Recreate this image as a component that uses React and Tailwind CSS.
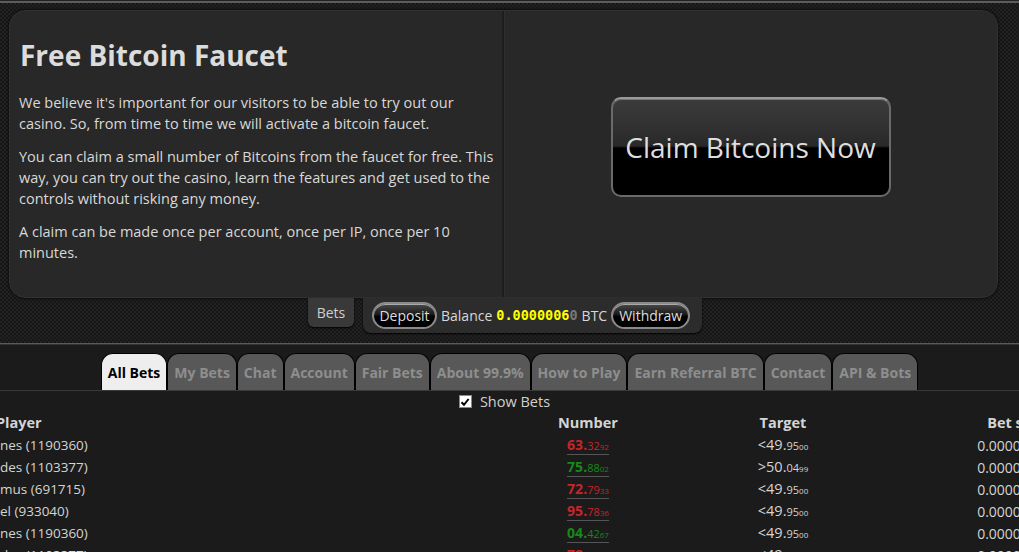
import React from "react";

const TABS = ["All Bets", "My Bets", "Chat", "Account", "Fair Bets", "About 99.9%", "How to Play", "Earn Referral BTC", "Contact", "API & Bots"];

const ROWS = [
  { player: "nes (1190360)", n: ["63", "32", "92"], win: false, t: ["<49", "95", "00"] },
  { player: "des (1103377)", n: ["75", "88", "02"], win: true, t: [">50", "04", "99"] },
  { player: "mus (691715)", n: ["72", "79", "33"], win: false, t: ["<49", "95", "00"] },
  { player: "el (933040)", n: ["95", "78", "36"], win: false, t: ["<49", "95", "00"] },
  { player: "nes (1190360)", n: ["04", "42", "67"], win: true, t: ["<49", "95", "00"] },
  { player: "des (1103377)", n: ["78", "11", "40"], win: false, t: ["<49", "95", "00"] },
];

function Pill({ children, className = "" }) {
  return (
    <button
      className={`h-[27px] rounded-full border-2 border-[#8a8a8a] bg-[linear-gradient(#4a4a4a,#1a1a1a_45%,#000_55%,#000)] px-[5px] text-[14px] leading-none text-[#ddd] shadow-[inset_0_1px_0_#aaa] ${className}`}
    >
      {children}
    </button>
  );
}

function Roll({ n, win }) {
  return (
    <span
      className={`border-b border-[#555] text-[14px] font-bold leading-[17px] ${win ? "text-[#168a16]" : "text-[#c6252b]"}`}
    >
      {n[0]}.
      <span className="text-[11px] font-normal">{n[1]}</span>
      <span className="text-[8px] font-normal">{n[2]}</span>
    </span>
  );
}

export default function App() {
  return (
    <div className="h-[552px] w-[1019px] overflow-hidden bg-[#1b1b1b] font-['Open_Sans',sans-serif] text-[#d8d8d8]">
      <div className="h-px bg-[#222]" />
      <div className="h-[2px] bg-[#5c5c5c]" />

      {/* checkered top area */}
      <div className="h-[340px] bg-[repeating-conic-gradient(#222_0_25%,#161616_0_50%)] bg-[length:4px_4px] pt-[7px]">
        <div className="ml-[9px] flex h-[288px] w-[989px] overflow-hidden rounded-[16px] border border-[#313131] bg-[#282828] shadow-[0_0_3px_#000]">
          <div className="w-[492px] shrink-0 pl-[9px] pr-[2px] pt-[26px]">
            <h1 className="mb-[19px] pl-px text-[28px] font-bold leading-[36px] text-[#dcdcdc]">Free Bitcoin Faucet</h1>
            <p className="mb-[12px] text-[14.5px] leading-[21px]">
              We believe it's important for our visitors to be able to try out our casino. So, from time to time we will activate a bitcoin faucet.
            </p>
            <p className="mb-[12px] text-[14.5px] leading-[21px]">
              You can claim a small number of Bitcoins from the faucet for free. This way, you can try out the casino, learn the features and get used to the controls without risking any money.
            </p>
            <p className="text-[14.5px] leading-[21px]">
              A claim can be made once per account, once per IP, once per 10 minutes.
            </p>
          </div>
          <div className="flex flex-1 items-center justify-center border-l-2 border-[#1d1d1d] pb-[14px] shadow-[inset_1px_0_0_#2f2f2f]">
            <button className="h-[100px] w-[280px] rounded-[10px] border-2 border-[#6a6a6a] border-t-[#9a9a9a] bg-[linear-gradient(#3c3c3c,#292929_49%,#000_51%,#000)] text-[28px] text-[#dedede] shadow-[inset_0_1px_0_#777]">
              Claim Bitcoins Now
            </button>
          </div>
        </div>

        <div className="ml-[308px] flex items-start gap-[9px]">
          <div className="flex h-[29px] w-[46px] items-center justify-center rounded-b-[6px] bg-[#393939] text-[14px] text-[#cfcfcf] shadow-[0_1px_2px_#000]">
            Bets
          </div>
          <div className="flex h-[35px] w-[339px] items-center gap-[4px] rounded-b-[8px] bg-[#2c2c2c] pl-[9px] text-[14px] shadow-[0_1px_2px_#000]">
            <Pill className="w-[65px]">Deposit</Pill>
            <span>Balance</span>
            <span className="font-['DejaVu_Sans_Mono',monospace] text-[13.5px] font-bold text-[#ffff00]">
              0.0000006<span className="text-[#777]">0</span>
            </span>
            <span>BTC</span>
            <Pill className="w-[79px]">Withdraw</Pill>
          </div>
        </div>
      </div>

      <div className="h-px bg-[#5a5a5a]" />
      <div className="h-px bg-[#333]" />

      {/* tabs */}
      <div className="flex justify-center border-b border-[#3a3a3a] pt-[8px]">
        {TABS.map((t, i) => (
          <div
            key={t}
            className={`flex h-[37px] items-center rounded-t-[12px] border border-b-0 border-black px-[6px] text-[14px] font-bold ${
              i === 0 ? "bg-[#eeeeee] text-black" : "bg-[#585858] text-[#8e8e8e]"
            }`}
          >
            {t}
          </div>
        ))}
      </div>

      <div className="flex h-[21px] items-center justify-center gap-[8px] pr-[10px] text-[14.5px] text-[#d0d0d0]">
        <span className="flex h-[13px] w-[13px] items-center justify-center border border-[#888] bg-white">
          <svg width="10" height="10" viewBox="0 0 10 10">
            <path d="M1.5 5.2 L4 7.8 L8.6 2" fill="none" stroke="#000" strokeWidth="2" />
          </svg>
        </span>
        <span>Show Bets</span>
      </div>

      {/* bets table */}
      <div className="text-[13.5px]">
        <div className="flex h-[22px] items-center text-[14.5px] font-bold text-[#d4d4d4]">
          <div className="-ml-[4px] w-[494px] shrink-0">Player</div>
          <div className="w-[196px] shrink-0 text-center">Number</div>
          <div className="w-[194px] shrink-0 text-center">Target</div>
          <div className="w-[270px] shrink-0 text-center">Bet size</div>
        </div>
        {ROWS.map((r, i) => (
          <div key={i} className="flex h-[22px] items-center text-[#d4d4d4]">
            <div className="w-[490px] shrink-0">{r.player}</div>
            <div className="w-[196px] shrink-0 text-center">
              <Roll n={r.n} win={r.win} />
            </div>
            <div className="w-[194px] shrink-0 text-center text-[14.5px]">
              {r.t[0]}.<span className="text-[11px]">{r.t[1]}</span>
              <span className="text-[8px]">{r.t[2]}</span>
            </div>
            <div className="w-[270px] shrink-0 text-center text-[14px]">0.00000100</div>
          </div>
        ))}
      </div>
    </div>
  );
}
